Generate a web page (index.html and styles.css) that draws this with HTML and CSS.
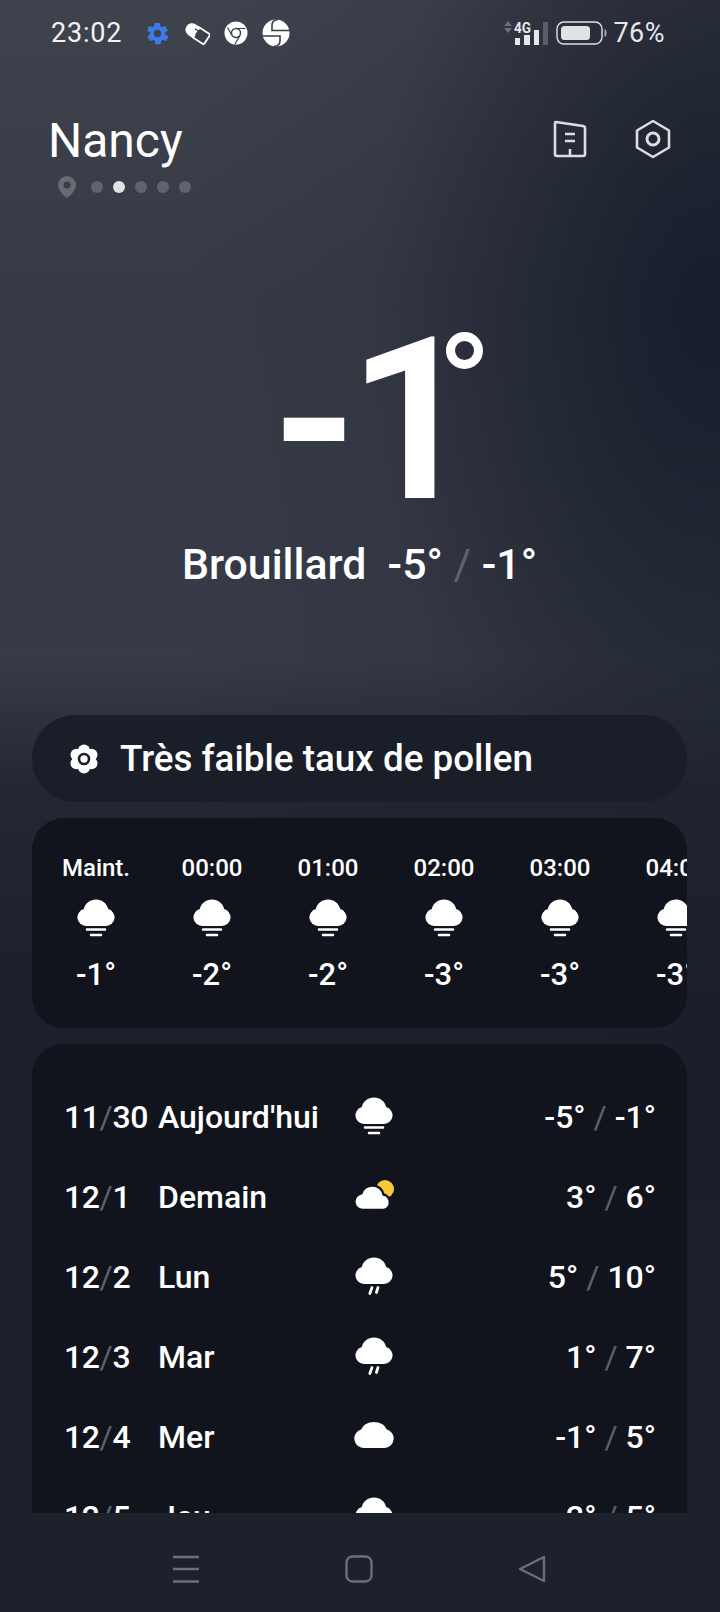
FILE: index.html
```html
<!DOCTYPE html>
<html lang="fr">

<head>
    <meta name="viewport" content="width=device-width, initial-scale=1.0">
    <title>Météo</title>
    <link rel="stylesheet" href="styles.css">
</head>

<body>
    <svg class="defs" width="0" height="0">
        <symbol id="fog" viewBox="0 0 40 40">
            <path d="M10 27a8.600 8.600 0 0 1-2.200-16.900C9 4.500 14 .5 20 .5s11 4 12.200 9.600A8.600 8.600 0 0 1 30 27z" fill="#fff" />
            <path d="M11 30.500h18M15 36h10" stroke="#fff" stroke-width="2.600" stroke-linecap="round" />
        </symbol>
        <symbol id="partly" viewBox="0 0 40 40">
            <circle cx="31" cy="12" r="9" fill="#f8c93a" />
            <path d="M9 33a8.400 8.400 0 0 1-1.500-16.700C9 11.500 13 8.500 18.500 8.500c5.500 0 10 3.800 11 9A8 8 0 0 1 30 33z" fill="#fff" stroke="#11141d" stroke-width="2.400" />
        </symbol>
        <symbol id="rain" viewBox="0 0 40 40">
            <path d="M10 27a8.600 8.600 0 0 1-2.200-16.900C9 4.500 14 .5 20 .5s11 4 12.200 9.600A8.600 8.600 0 0 1 30 27z" fill="#fff" />
            <path d="M18 30.500l-2.200 6M24 30.500l-1.600 5" stroke="#fff" stroke-width="2.800" stroke-linecap="round" />
        </symbol>
        <symbol id="cloud" viewBox="0 0 40 40">
            <path d="M9.500 31a9.500 9.500 0 0 1-2-18.700C9 8 14 5 20 5s11 3 12.500 7.300A9.500 9.500 0 0 1 30.500 31z" fill="#fff" />
        </symbol>
    </svg>

    <div class="screen">
        <div class="status">
            <span class="status-time">23:02</span>
            <div class="status-icons">
                <svg width="25" height="25" viewBox="0 0 24 24">
                    <path fill="#3b7ae8" fill-rule="evenodd" d="M19.400 13c.1-.3.1-.7.1-1s0-.7-.1-1l2.200-1.700c.2-.2.2-.4.1-.6l-2.100-3.600c-.1-.2-.4-.3-.6-.2l-2.600 1c-.5-.4-1.100-.7-1.700-1l-.4-2.700c0-.3-.2-.4-.5-.4h-4.200c-.3 0-.5.100-.5.400l-.4 2.700c-.6.300-1.200.6-1.700 1l-2.600-1c-.2-.1-.5 0-.6.200L2.500 8.700c-.1.200-.1.400.1.600L4.800 11c-.1.300-.1.700-.1 1s0 .7.100 1l-2.200 1.700c-.2.200-.2.400-.1.600l2.100 3.600c.1.200.4.300.6.200l2.600-1c.5.400 1.100.7 1.700 1l.4 2.700c0 .3.200.4.500.4h4.200c.3 0 .5-.1.500-.4l.4-2.700c.6-.3 1.200-.6 1.700-1l2.600 1c.2.100.5 0 .6-.2l2.100-3.600c.1-.2.100-.4-.1-.6zM12 15.500a3.500 3.500 0 1 1 0-7 3.500 3.500 0 0 1 0 7z" />
                </svg>
                <svg width="26" height="26" viewBox="0 0 26 26">
                    <g transform="rotate(33 13 13)">
                        <rect x="11" y="7" width="14" height="12" rx="1.500" fill="#3b3f4a" stroke="#fff" stroke-width="1.800" />
                        <path d="M13 6.500H7a6.500 6.500 0 0 0 0 13h6z" fill="#fff" />
                        <path d="M9 10.500h4v5" fill="none" stroke="#3b3f4a" stroke-width="1.300" />
                    </g>
                </svg>
                <svg width="24" height="24" viewBox="0 0 24 24">
                    <circle cx="12" cy="12" r="11.500" fill="#fff" />
                    <circle cx="12" cy="12" r="4.500" fill="#fff" stroke="#3b3f4a" stroke-width="1.400" />
                    <path d="M12 7.500h9.500M8 14.500L3.500 6.500M16 14.500l-5 8.500" stroke="#3b3f4a" stroke-width="1.200" fill="none" />
                </svg>
                <svg width="28" height="28" viewBox="0 0 28 28">
                    <circle cx="14" cy="14" r="13.500" fill="#fff" />
                    <path d="M16 .5C12 1 10 3 10 6v5.500h18M12 27.500c4-.5 6-2.500 6-5.500v-5H0" stroke="#3b3f4a" stroke-width="1.600" fill="none" />
                </svg>
            </div>
            <div class="status-right">
                <svg class="net-icon" width="48" height="25" viewBox="0 0 48 25">
                    <path d="M6 0l4 5H2zM6 12l4-5H2z" fill="#6d7079" />
                    <text class="net-label" x="12" y="12" textLength="17" lengthAdjust="spacingAndGlyphs">4G</text>
                    <path d="M13 17h5v7h-5zM22 14h6v10h-6zM32 9h5v15h-5z" fill="#e6e7e9" />
                    <path d="M41 1h5v23h-5z" fill="#5a5e68" />
                </svg>
                <svg width="51" height="24" viewBox="0 0 51 24">
                    <rect x="1" y="1" width="45" height="22" rx="7" fill="none" stroke="#dfe0e2" stroke-width="1.400" />
                    <rect x="5" y="5" width="29" height="14" rx="3.500" fill="#e1e2e4" />
                    <path d="M48.500 8c1.500 .5 2 2 2 4s-.5 3.500-2 4z" fill="#a9abb0" />
                </svg>
                <span class="status-battery">76%</span>
            </div>
        </div>

        <div class="content">
            <header class="header">
                <div>
                    <h1 class="city">Nancy</h1>
                    <div class="pager">
                        <svg width="18" height="22" viewBox="0 0 18 22">
                            <path fill="#676b74" fill-rule="evenodd" d="M9 0a9 9 0 0 1 9 9c0 5-5 10-9 13-4-3-9-8-9-13a9 9 0 0 1 9-9zm0 5.500a3.500 3.500 0 1 0 0 7 3.500 3.500 0 0 0 0-7z" />
                        </svg>
                        <div class="dots">
                            <span class="dot"></span>
                            <span class="dot dot-active"></span>
                            <span class="dot"></span>
                            <span class="dot"></span>
                            <span class="dot"></span>
                        </div>
                    </div>
                </div>
                <div class="header-icons">
                    <svg width="34" height="40" viewBox="0 0 34 40" fill="none" stroke="#dcdde0" stroke-width="2.600" stroke-linejoin="round">
                        <path d="M3 3l27 4c1 .2 2 .8 2 2v26c0 1.500-.8 2-2 2H4c-1.200 0-2-.5-2-2V4c0-.7.400-1.100 1-1z" />
                        <path d="M12 15h10M12 22h10M17 30v7" />
                    </svg>
                    <svg width="38" height="40" viewBox="0 0 38 40" fill="none" stroke="#dcdde0" stroke-width="2.600" stroke-linejoin="round">
                        <path d="M19 2l16 9.500v17L19 38 3 28.500v-17z" />
                        <circle cx="19" cy="20" r="6" stroke-width="3" />
                    </svg>
                </div>
            </header>

            <section class="hero">
                <div class="hero-temp">
                    <span class="hero-num">-1</span>
                    <span class="hero-deg"></span>
                </div>
                <p class="hero-line">Brouillard&nbsp; -5° <span class="slash">/</span> -1°</p>
            </section>

            <div class="pollen">
                <svg width="30" height="30" viewBox="0 0 30 30">
                    <g fill="#fff">
                        <circle cx="15" cy="6.500" r="6" />
                        <circle cx="7.500" cy="10.800" r="6" />
                        <circle cx="7.500" cy="19.200" r="6" />
                        <circle cx="15" cy="23.500" r="6" />
                        <circle cx="22.500" cy="19.200" r="6" />
                        <circle cx="22.500" cy="10.800" r="6" />
                    </g>
                    <circle cx="15" cy="15" r="7.500" fill="#fff" />
                    <circle cx="15" cy="15" r="5" fill="none" stroke="#1b1f2a" stroke-width="2.600" />
                </svg>
                <span>Très faible taux de pollen</span>
            </div>

            <div class="card hours">
                <div class="hour">
                    <span class="hour-label">Maint.</span>
                    <svg width="40" height="40"><use href="#fog" /></svg>
                    <span class="hour-temp">-1°</span>
                </div>
                <div class="hour">
                    <span class="hour-label">00:00</span>
                    <svg width="40" height="40"><use href="#fog" /></svg>
                    <span class="hour-temp">-2°</span>
                </div>
                <div class="hour">
                    <span class="hour-label">01:00</span>
                    <svg width="40" height="40"><use href="#fog" /></svg>
                    <span class="hour-temp">-2°</span>
                </div>
                <div class="hour">
                    <span class="hour-label">02:00</span>
                    <svg width="40" height="40"><use href="#fog" /></svg>
                    <span class="hour-temp">-3°</span>
                </div>
                <div class="hour">
                    <span class="hour-label">03:00</span>
                    <svg width="40" height="40"><use href="#fog" /></svg>
                    <span class="hour-temp">-3°</span>
                </div>
                <div class="hour">
                    <span class="hour-label">04:00</span>
                    <svg width="40" height="40"><use href="#fog" /></svg>
                    <span class="hour-temp">-3°</span>
                </div>
            </div>

            <div class="card days">
                <div class="day">
                    <span class="day-date">11<span class="slash">/</span>30</span>
                    <span class="day-name">Aujourd'hui</span>
                    <svg width="40" height="40"><use href="#fog" /></svg>
                    <span class="day-temp">-5° <span class="slash">/</span> -1°</span>
                </div>
                <div class="day">
                    <span class="day-date">12<span class="slash">/</span>1</span>
                    <span class="day-name">Demain</span>
                    <svg width="40" height="40"><use href="#partly" /></svg>
                    <span class="day-temp">3° <span class="slash">/</span> 6°</span>
                </div>
                <div class="day">
                    <span class="day-date">12<span class="slash">/</span>2</span>
                    <span class="day-name">Lun</span>
                    <svg width="40" height="40"><use href="#rain" /></svg>
                    <span class="day-temp">5° <span class="slash">/</span> 10°</span>
                </div>
                <div class="day">
                    <span class="day-date">12<span class="slash">/</span>3</span>
                    <span class="day-name">Mar</span>
                    <svg width="40" height="40"><use href="#rain" /></svg>
                    <span class="day-temp">1° <span class="slash">/</span> 7°</span>
                </div>
                <div class="day">
                    <span class="day-date">12<span class="slash">/</span>4</span>
                    <span class="day-name">Mer</span>
                    <svg width="40" height="40"><use href="#cloud" /></svg>
                    <span class="day-temp">-1° <span class="slash">/</span> 5°</span>
                </div>
                <div class="day">
                    <span class="day-date">12<span class="slash">/</span>5</span>
                    <span class="day-name">Jeu</span>
                    <svg width="40" height="40"><use href="#rain" /></svg>
                    <span class="day-temp">2° <span class="slash">/</span> 5°</span>
                </div>
            </div>
        </div>

        <nav class="navbar">
            <svg width="28" height="28" viewBox="0 0 28 28" stroke="#6c6f77" stroke-width="2.400">
                <path d="M1 2h26M1 14h26M1 26.500h26" />
            </svg>
            <svg width="28" height="28" viewBox="0 0 28 28" fill="none" stroke="#6c6f77" stroke-width="2.400">
                <rect x="1.500" y="1.500" width="25" height="25" rx="6" />
            </svg>
            <svg width="28" height="28" viewBox="0 0 28 28" fill="none" stroke="#6c6f77" stroke-width="2.400" stroke-linejoin="round">
                <path d="M26 2v24L2 14z" />
            </svg>
        </nav>
    </div>
</body>

</html>
```

FILE: styles.css
```css
body {
    margin: 0;
    padding: 0;
    overflow: hidden;
    background: #1c212c;
    font-family: Roboto, "Liberation Sans", sans-serif;
    color: #fff;
}

.defs {
    display: block;
    height: 0;
}

.screen {
    width: 720px;
    height: 1612px;
    display: flex;
    flex-direction: column;
    overflow: hidden;
    background:
        radial-gradient(ellipse 340px 560px at 710px 310px, rgba(22, 28, 42, 0.95), rgba(22, 28, 42, 0) 100%),
        linear-gradient(90deg, rgba(24, 29, 42, 0) 25%, rgba(24, 29, 42, 0.3) 100%),
        linear-gradient(180deg, #3f434d 0, #363a45 300px, #373b47 660px, #232733 790px, #1b202c 1000px, #1c212c 100%);
}

/* STATUS BAR */
.status {
    height: 66px;
    flex: none;
    display: flex;
    align-items: center;
    padding: 0 55px 0 51px;
}

.status-time {
    font-size: 27px;
    letter-spacing: 0.8px;
    width: 94px;
    color: #f2f2f3;
}

.status-icons {
    display: flex;
    align-items: center;
    gap: 14px;
}

.status-right {
    margin-left: auto;
    display: flex;
    align-items: center;
    gap: 6px;
}

.status-battery {
    font-size: 27px;
    letter-spacing: 0.5px;
    color: #e6e7e9;
}

.net-icon {
    overflow: visible;
}

.net-label {
    font-size: 15px;
    font-weight: 700;
    fill: #e6e7e9;
}

/* HEADER */
.content {
    flex: 1;
    min-height: 0;
    overflow: hidden;
    padding: 0 33px 0 32px;
}

.header {
    display: flex;
    justify-content: space-between;
    padding: 48px 15px 0 16px;
}

.city {
    margin: 0;
    font-size: 48px;
    line-height: 54px;
    font-weight: 400;
}

.pager {
    display: flex;
    align-items: center;
    gap: 15px;
    margin: 8px 0 0 10px;
}

.dots {
    display: flex;
    gap: 10px;
}

.dot {
    width: 12px;
    height: 12px;
    border-radius: 50%;
    background: #5f636c;
}

.dot-active {
    background: #e2e3e5;
}

.header-icons {
    display: flex;
    gap: 47px;
    padding-top: 5px;
}

/* CURRENT WEATHER */
.hero {
    display: flex;
    flex-direction: column;
    align-items: center;
    margin-top: 118px;
}

.hero-temp {
    display: flex;
    height: 210px;
    padding-left: 37px;
}

.hero-num {
    font-size: 226px;
    line-height: 210px;
    font-weight: 600;
    letter-spacing: -8px;
}

.hero-deg {
    width: 19px;
    height: 19px;
    border: 9px solid #fff;
    border-radius: 50%;
    margin: 16px 0 0 -23px;
}

.hero-line {
    margin: 13px 0 0;
    font-size: 42.8px;
    line-height: 50px;
    font-weight: 500;
}

.slash {
    color: #5e626b;
    font-weight: 400;
}

/* POLLEN */
.pollen {
    display: flex;
    align-items: center;
    gap: 21px;
    height: 87px;
    margin-top: 126px;
    padding-left: 37px;
    border-radius: 44px;
    background: #1a1e29;
    font-size: 36.8px;
    font-weight: 500;
}

/* CARDS */
.card {
    margin-top: 16px;
    border-radius: 32px;
    background: #11141d;
}

.hours {
    height: 210px;
    display: flex;
    padding-left: 6px;
    overflow: hidden;
}

.hour {
    flex: 0 0 116px;
    display: flex;
    flex-direction: column;
    align-items: center;
    padding-top: 36px;
}

.hour-label {
    font-size: 24px;
    line-height: 28px;
    font-weight: 500;
}

.hour svg {
    margin-top: 17px;
}

.hour-temp {
    margin-top: 18px;
    font-size: 31px;
    line-height: 36px;
    font-weight: 500;
}

.days {
    padding: 33px 31px 0 32px;
}

.day {
    height: 80px;
    display: flex;
    align-items: center;
    font-size: 32px;
    font-weight: 500;
}

.day-date {
    width: 94px;
    flex: none;
    letter-spacing: -0.4px;
}

.day-name {
    width: 196px;
    flex: none;
}

.day-temp {
    margin-left: auto;
}

/* NAV */
.navbar {
    height: 99px;
    box-sizing: border-box;
    flex: none;
    display: flex;
    align-items: flex-start;
    padding: 42px 0 0 172px;
    gap: 145px;
    background: #1c212c;
}
```
